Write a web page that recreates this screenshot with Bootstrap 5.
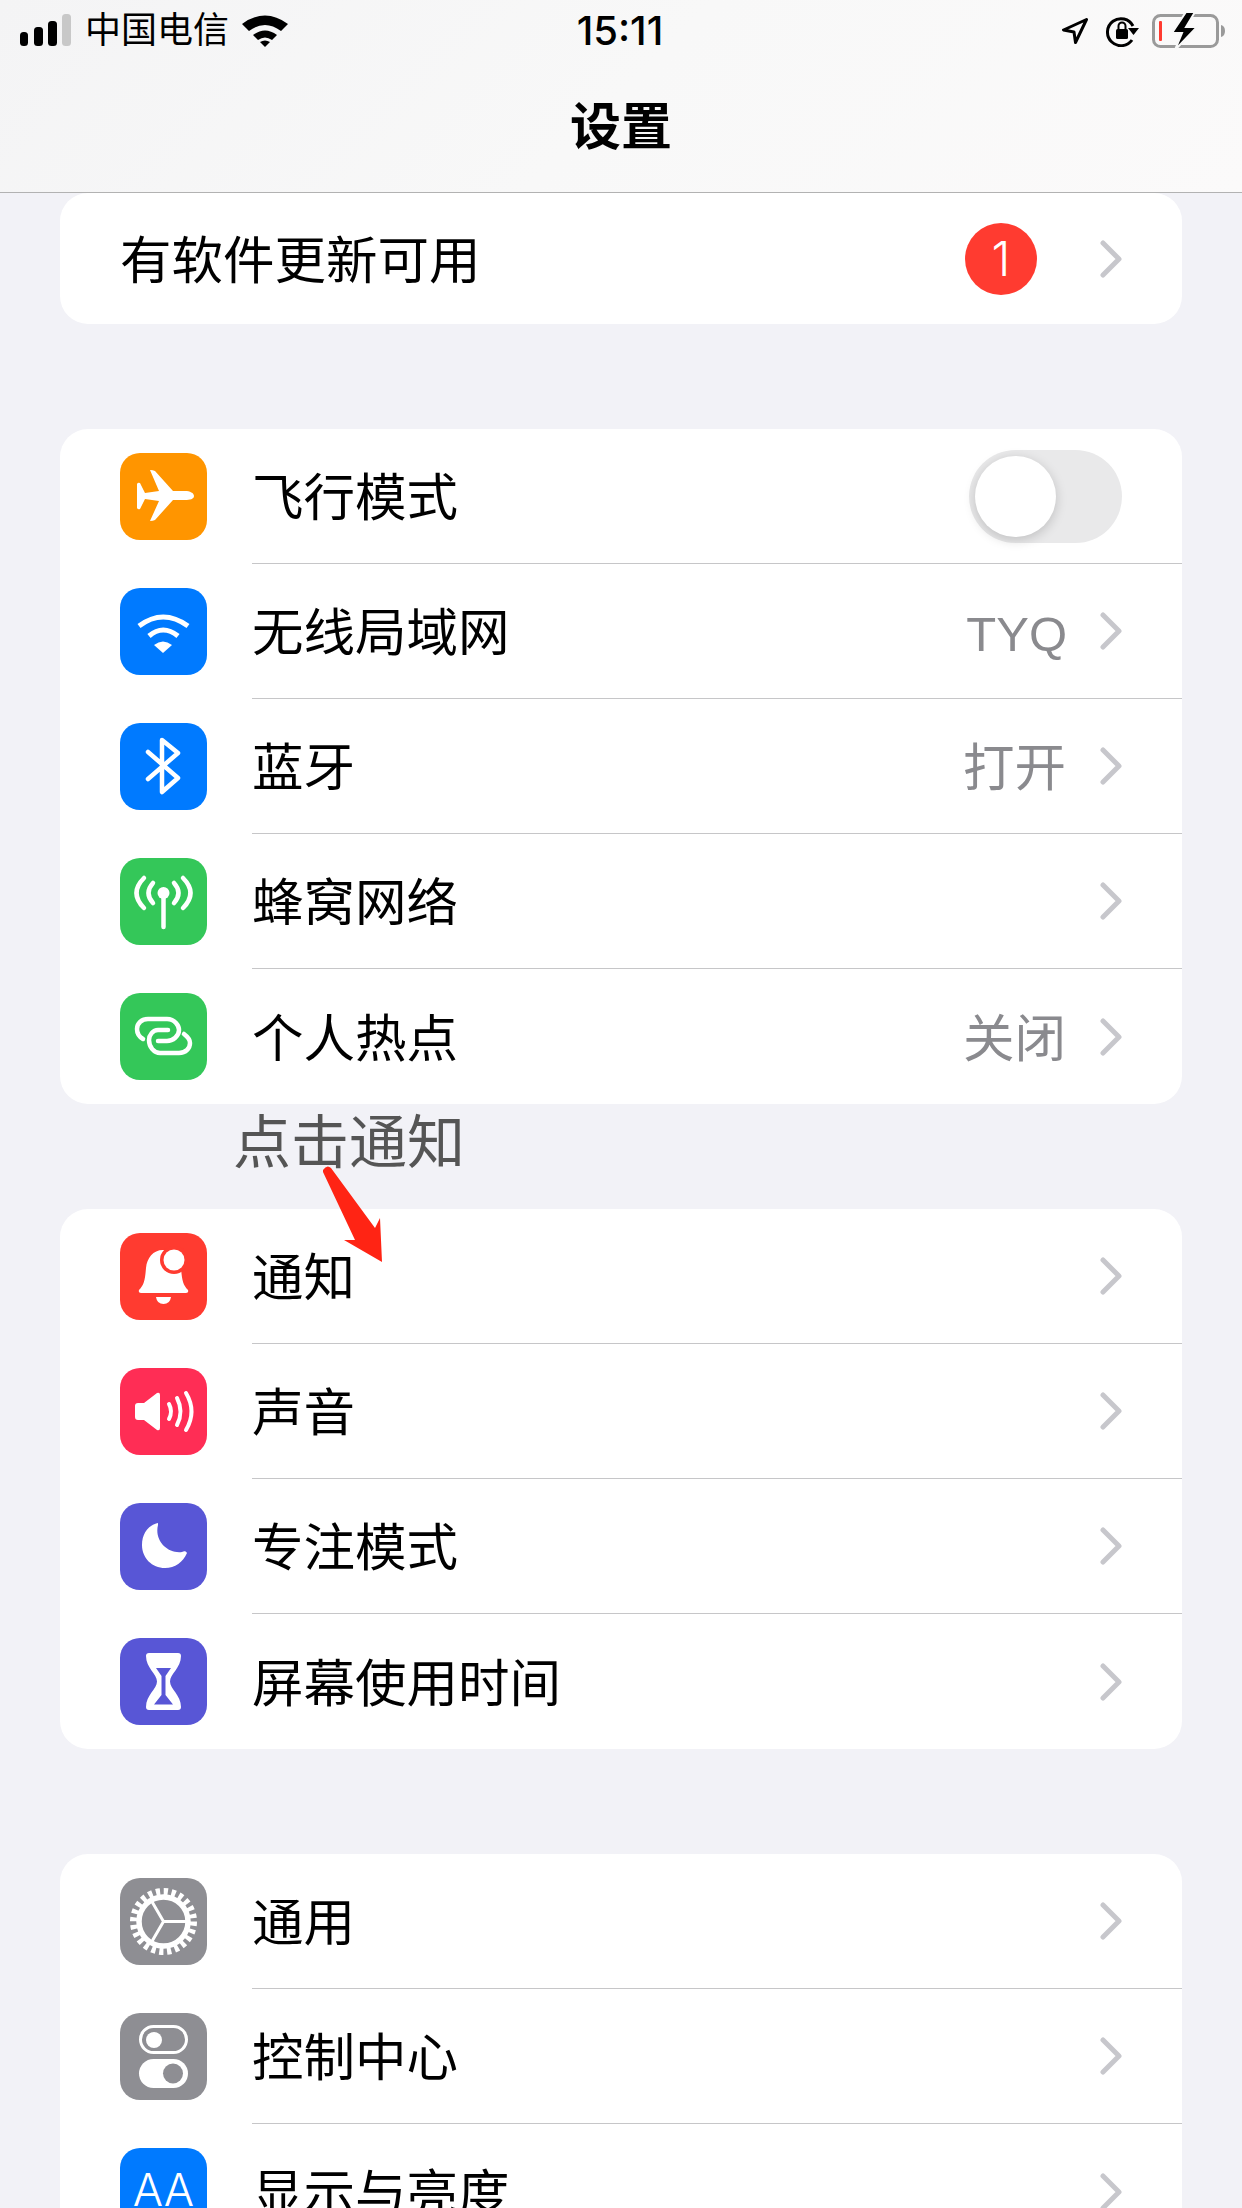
<!DOCTYPE html>
<html lang="zh-CN">
<head>
  <meta charset="UTF-8">
  <meta name="viewport" content="width=device-width, initial-scale=1.0">
  <title>设置</title>
  <link href="https://cdn.jsdelivr.net/npm/bootstrap@5.3.0/dist/css/bootstrap.min.css" rel="stylesheet">
  <style>
    body {
      font-family: "Liberation Sans", "Noto Sans CJK SC", sans-serif;
      background-color: #f2f2f7;
      width: 1242px;
      height: 2208px;
      overflow: hidden;
      position: relative;
      color: #000;
    }
    .top-bar {
      height: 193px;
      background: linear-gradient(135deg, #f4f4f5 0%, #f8f8f8 50%, #fbfafa 100%);
      border-bottom: 1px solid #b2b2b2;
    }
    .status-row {
      height: 62px;
      padding: 0 16px 0 20px;
    }
    .status-side {
      width: 400px;
    }
    .carrier {
      font-size: 36px;
      line-height: 1;
      margin-left: 13px;
      margin-right: 13px;
    }
    .clock {
      font-size: 40px;
      font-weight: 500;
      font-family: Inter, sans-serif;
      line-height: 1;
      margin-right: 6px;
    }
    .lock-icon {
      margin-left: 18px;
    }
    .battery-icon {
      margin-left: 12px;
    }
    .page-title {
      font-size: 51px;
      font-weight: 700;
      line-height: 1;
      margin: 0;
      padding-top: 40px;
      text-align: center;
    }
    .group-list {
      margin: 0 60px 105px;
      background: #fff;
      border-radius: 28px;
      overflow: hidden;
    }
    .set-row {
      height: 135px;
      padding-left: 60px;
      padding-right: 60px;
    }
    .set-row.short-row {
      height: 131px;
    }
    .set-icon {
      width: 87px;
      height: 87px;
      border-radius: 20px;
      flex: 0 0 87px;
      margin-right: 45px;
      display: block;
    }
    .set-body {
      height: 135px;
      border-bottom: 1px solid #c6c6c8;
      margin-right: -60px;
      padding-right: 60px;
    }
    .set-row:last-child .set-body {
      border-bottom: 0;
    }
    .set-label {
      font-size: 51.5px;
      line-height: 1;
      padding-top: 6px;
    }
    .set-value {
      font-size: 51.5px;
      line-height: 1;
      color: #8a8a8e;
      margin-right: 34px;
      padding-top: 6px;
    }
    .set-value.latin-value {
      font-size: 49px;
      margin-right: 33px;
    }
    .chev {
      width: 22px;
      height: 38px;
      display: block;
    }
    .update-badge {
      width: 72px;
      height: 72px;
      border-radius: 50%;
      background: #ff3b30;
      color: #fff;
      font-family: Inter, sans-serif;
      font-weight: 300;
      font-size: 48px;
      line-height: 72px;
      text-align: center;
      margin-right: 63px;
    }
    .toggle-off {
      width: 153px;
      height: 93px;
      border-radius: 47px;
      background: #e9e9ea;
      position: relative;
    }
    .toggle-knob {
      position: absolute;
      left: 6px;
      top: 6px;
      width: 81px;
      height: 81px;
      border-radius: 50%;
      background: #fff;
      box-shadow: 0 3px 12px rgba(0, 0, 0, .18);
    }
    .note-text {
      position: absolute;
      left: 233px;
      top: 1108px;
      font-size: 58px;
      line-height: 1.2;
      color: #555;
    }
    .note-arrow {
      position: absolute;
      left: 315px;
      top: 1160px;
      width: 80px;
      height: 110px;
    }
  </style>
</head>
<body>
  <header class="top-bar">
    <div class="status-row d-flex align-items-center justify-content-between">
      <div class="status-side d-flex align-items-center">
        <svg width="52" height="34" viewBox="0 0 52 34"><rect x="0" y="18" width="8" height="14" rx="3.500" fill="#000"/><rect x="14" y="13" width="9" height="19" rx="3.500" fill="#000"/><rect x="28" y="7" width="9" height="25" rx="3.500" fill="#000"/><rect x="42" y="0" width="9" height="32" rx="3.500" fill="#c8c8c8"/></svg>
        <span class="carrier">中国电信</span>
        <svg width="46" height="34" viewBox="0 0 46 34"><path d="M0 10Q23-7 46 10L39 17Q23 5 7 17Z" fill="#000"/><path d="M11 21Q23 12 35 21L30 26Q23 21 16 26Z" fill="#000"/><path d="M18 28Q23 25 28 28L23 33Z" fill="#000"/></svg>
      </div>
      <div class="clock">15:11</div>
      <div class="status-side d-flex align-items-center justify-content-end">
        <svg width="26" height="26" viewBox="0 0 26 26"><path d="M24.500 1.500L1.500 12L12 14L13.500 24.500Z" fill="none" stroke="#000" stroke-width="3" stroke-linejoin="round"/></svg>
        <svg class="lock-icon" width="34" height="32" viewBox="0 0 34 32"><path d="M26 25A13.500 13.500 0 1 1 27 11" fill="none" stroke="#000" stroke-width="3"/><path d="M22 13H33L27.500 20Z" fill="#000"/><rect x="10" y="14" width="12" height="10" rx="1.500" fill="#000"/><path d="M12.500 14V11A3.500 3.500 0 0 1 19.500 11V14" fill="none" stroke="#000" stroke-width="2"/></svg>
        <svg class="battery-icon" width="74" height="38" viewBox="0 0 74 38"><rect x="1.500" y="3.500" width="64" height="31" rx="7" fill="none" stroke="#9a9a9a" stroke-width="3"/><rect x="7" y="9" width="3" height="20" rx="1" fill="#ff3b30"/><path d="M34 0L20 21H30L23 38L45 15H34L43 0Z" fill="#000" stroke="#f8f8f8" stroke-width="2"/><path d="M69 13Q73 14 73 19Q73 24 69 25Z" fill="#9a9a9a"/></svg>
      </div>
    </div>
    <h1 class="page-title">设置</h1>
  </header>

  <main>
    <div class="group-list">
      <div class="set-row short-row d-flex align-items-center">
        <span class="set-label flex-grow-1">有软件更新可用</span>
        <span class="update-badge">1</span>
        <svg class="chev" viewBox="0 0 22 38"><path d="M3 3L19 19L3 35" fill="none" stroke="#c7c7cc" stroke-width="5" stroke-linecap="round" stroke-linejoin="round"/></svg>
      </div>
    </div>

    <div class="group-list">
      <div class="set-row d-flex align-items-center">
        <svg class="set-icon" viewBox="0 0 87 87"><rect width="87" height="87" fill="#ff9500"/><path d="M74 43C74 40 70 38 65 38H53L35 18Q33 17 30 17L39 38L25 40L20 30Q18 29 17 31V55Q18 57 20 56L25 46L39 48L30 68Q33 68 35 67L53 47H65C70 47 74 46 74 43Z" fill="#fff"/></svg>
        <div class="set-body flex-grow-1 d-flex align-items-center">
          <span class="set-label flex-grow-1">飞行模式</span>
          <div class="toggle-off"><div class="toggle-knob"></div></div>
        </div>
      </div>
      <div class="set-row d-flex align-items-center">
        <svg class="set-icon" viewBox="0 0 87 87"><rect width="87" height="87" fill="#007aff"/><path d="M19 38Q43 20 68 38M29 48Q43 36 58 48" fill="none" stroke="#fff" stroke-width="5"/><path d="M34 57Q43 50 52 57L43 65Z" fill="#fff"/></svg>
        <div class="set-body flex-grow-1 d-flex align-items-center">
          <span class="set-label flex-grow-1">无线局域网</span>
          <span class="set-value latin-value">TYQ</span>
          <svg class="chev" viewBox="0 0 22 38"><path d="M3 3L19 19L3 35" fill="none" stroke="#c7c7cc" stroke-width="5" stroke-linecap="round" stroke-linejoin="round"/></svg>
        </div>
      </div>
      <div class="set-row d-flex align-items-center">
        <svg class="set-icon" viewBox="0 0 87 87"><rect width="87" height="87" fill="#007aff"/><path d="M28 29L58 55L42 69V17L58 30L28 56" fill="none" stroke="#fff" stroke-width="4.500" stroke-linecap="round" stroke-linejoin="round"/></svg>
        <div class="set-body flex-grow-1 d-flex align-items-center">
          <span class="set-label flex-grow-1">蓝牙</span>
          <span class="set-value">打开</span>
          <svg class="chev" viewBox="0 0 22 38"><path d="M3 3L19 19L3 35" fill="none" stroke="#c7c7cc" stroke-width="5" stroke-linecap="round" stroke-linejoin="round"/></svg>
        </div>
      </div>
      <div class="set-row d-flex align-items-center">
        <svg class="set-icon" viewBox="0 0 87 87"><rect width="87" height="87" fill="#34c759"/><circle cx="43.500" cy="35" r="6" fill="#fff"/><path d="M43.500 38V69" stroke="#fff" stroke-width="4.500" stroke-linecap="round"/><path d="M33 25Q24 35 33 45M54 25Q63 35 54 45M24 20Q9 35 24 50M63 20Q78 35 63 50" fill="none" stroke="#fff" stroke-width="4.500" stroke-linecap="round"/></svg>
        <div class="set-body flex-grow-1 d-flex align-items-center">
          <span class="set-label flex-grow-1">蜂窝网络</span>
          <svg class="chev" viewBox="0 0 22 38"><path d="M3 3L19 19L3 35" fill="none" stroke="#c7c7cc" stroke-width="5" stroke-linecap="round" stroke-linejoin="round"/></svg>
        </div>
      </div>
      <div class="set-row d-flex align-items-center">
        <svg class="set-icon" viewBox="0 0 87 87"><rect width="87" height="87" fill="#34c759"/><path d="M23 46C18 43 17 38 17 36C17 30 22 26 28 26H47C55 26 59 33 59 37C59 43 53 48 47 48H38" fill="none" stroke="#fff" stroke-width="4.500" stroke-linecap="round"/><path d="M48 37H38C33 37 29 42 29 47C29 54 34 60 40 60H59C66 60 70 55 70 50C70 46 68 44 64 41" fill="none" stroke="#fff" stroke-width="4.500" stroke-linecap="round"/></svg>
        <div class="set-body flex-grow-1 d-flex align-items-center">
          <span class="set-label flex-grow-1">个人热点</span>
          <span class="set-value">关闭</span>
          <svg class="chev" viewBox="0 0 22 38"><path d="M3 3L19 19L3 35" fill="none" stroke="#c7c7cc" stroke-width="5" stroke-linecap="round" stroke-linejoin="round"/></svg>
        </div>
      </div>
    </div>

    <div class="group-list">
      <div class="set-row d-flex align-items-center">
        <svg class="set-icon" viewBox="0 0 87 87"><rect width="87" height="87" fill="#ff3b30"/><path d="M43 17C33 17 27 25 26 35C25 47 24 52 19 57Q18 60 21 60H66Q69 60 68 57C63 52 62 47 61 35C60 25 53 17 43 17Z" fill="#fff"/><path d="M36 64H51Q50 71 43.500 71Q37 71 36 64Z" fill="#fff"/><circle cx="54" cy="27" r="14" fill="#ff3b30"/><circle cx="54" cy="27" r="10.500" fill="#fff"/></svg>
        <div class="set-body flex-grow-1 d-flex align-items-center">
          <span class="set-label flex-grow-1">通知</span>
          <svg class="chev" viewBox="0 0 22 38"><path d="M3 3L19 19L3 35" fill="none" stroke="#c7c7cc" stroke-width="5" stroke-linecap="round" stroke-linejoin="round"/></svg>
        </div>
      </div>
      <div class="set-row d-flex align-items-center">
        <svg class="set-icon" viewBox="0 0 87 87"><rect width="87" height="87" fill="#ff2d55"/><path d="M18 35H24L37 25Q40 24 40 27V60Q40 63 37 62L24 52H18Q15 52 15 49V38Q15 35 18 35Z" fill="#fff"/><path d="M49 36Q53 43.500 49 51M57 30Q64 43.500 57 57M66 25Q77 43.500 66 62" fill="none" stroke="#fff" stroke-width="4" stroke-linecap="round"/></svg>
        <div class="set-body flex-grow-1 d-flex align-items-center">
          <span class="set-label flex-grow-1">声音</span>
          <svg class="chev" viewBox="0 0 22 38"><path d="M3 3L19 19L3 35" fill="none" stroke="#c7c7cc" stroke-width="5" stroke-linecap="round" stroke-linejoin="round"/></svg>
        </div>
      </div>
      <div class="set-row d-flex align-items-center">
        <svg class="set-icon" viewBox="0 0 87 87"><rect width="87" height="87" fill="#5856d6"/><path d="M38 20C28 22 22 31 22 42C22 55 32 65 45 65C55 65 63 59 67 50C66 48 64 48 62 49C48 51 34 38 38 22Z" fill="#fff"/></svg>
        <div class="set-body flex-grow-1 d-flex align-items-center">
          <span class="set-label flex-grow-1">专注模式</span>
          <svg class="chev" viewBox="0 0 22 38"><path d="M3 3L19 19L3 35" fill="none" stroke="#c7c7cc" stroke-width="5" stroke-linecap="round" stroke-linejoin="round"/></svg>
        </div>
      </div>
      <div class="set-row d-flex align-items-center">
        <svg class="set-icon" viewBox="0 0 87 87"><rect width="87" height="87" fill="#5856d6"/><path d="M29 15H58Q61 15 61 18C61 30 50 36 50 43.500C50 51 61 57 61 69Q61 72 58 72H29Q26 72 26 69C26 57 37 51 37 43.500C37 36 26 30 26 18Q26 15 29 15Z" fill="#fff"/><path d="M36 30H51L45.500 38V57L53 66.500H34L41.500 57V38Z" fill="#5856d6"/></svg>
        <div class="set-body flex-grow-1 d-flex align-items-center">
          <span class="set-label flex-grow-1">屏幕使用时间</span>
          <svg class="chev" viewBox="0 0 22 38"><path d="M3 3L19 19L3 35" fill="none" stroke="#c7c7cc" stroke-width="5" stroke-linecap="round" stroke-linejoin="round"/></svg>
        </div>
      </div>
    </div>

    <div class="group-list">
      <div class="set-row d-flex align-items-center">
        <svg class="set-icon" viewBox="0 0 87 87"><rect width="87" height="87" fill="#8e8e93"/><circle cx="43.500" cy="43.500" r="30" fill="none" stroke="#fff" stroke-width="7" stroke-dasharray="4.200 3.654"/><circle cx="43.500" cy="43.500" r="24.500" fill="none" stroke="#fff" stroke-width="5.500"/><path d="M43.500 43.500H68M43.500 43.500L31 22M43.500 43.500L31 65" stroke="#fff" stroke-width="3"/></svg>
        <div class="set-body flex-grow-1 d-flex align-items-center">
          <span class="set-label flex-grow-1">通用</span>
          <svg class="chev" viewBox="0 0 22 38"><path d="M3 3L19 19L3 35" fill="none" stroke="#c7c7cc" stroke-width="5" stroke-linecap="round" stroke-linejoin="round"/></svg>
        </div>
      </div>
      <div class="set-row d-flex align-items-center">
        <svg class="set-icon" viewBox="0 0 87 87"><rect width="87" height="87" fill="#8e8e93"/><rect x="20.500" y="13.500" width="46" height="26" rx="13" fill="none" stroke="#fff" stroke-width="3"/><circle cx="34" cy="27" r="8" fill="#fff"/><rect x="19" y="46" width="49" height="29" rx="14.500" fill="#fff"/><circle cx="53" cy="60.500" r="10" fill="#8e8e93"/></svg>
        <div class="set-body flex-grow-1 d-flex align-items-center">
          <span class="set-label flex-grow-1">控制中心</span>
          <svg class="chev" viewBox="0 0 22 38"><path d="M3 3L19 19L3 35" fill="none" stroke="#c7c7cc" stroke-width="5" stroke-linecap="round" stroke-linejoin="round"/></svg>
        </div>
      </div>
      <div class="set-row d-flex align-items-center">
        <svg class="set-icon" viewBox="0 0 87 87"><rect width="87" height="87" fill="#007aff"/><text x="43.500" y="58" text-anchor="middle" font-size="45" font-weight="300" font-family="Inter" fill="#fff">AA</text></svg>
        <div class="set-body flex-grow-1 d-flex align-items-center">
          <span class="set-label flex-grow-1">显示与亮度</span>
          <svg class="chev" viewBox="0 0 22 38"><path d="M3 3L19 19L3 35" fill="none" stroke="#c7c7cc" stroke-width="5" stroke-linecap="round" stroke-linejoin="round"/></svg>
        </div>
      </div>
    </div>
  </main>

  <div class="note-text">点击通知</div>
  <svg class="note-arrow" viewBox="0 0 80 110"><path d="M8 10Q12 4 16 8L60 68L65 58L67 102L29 80L40 80L8 12Z" fill="#ff2414"/></svg>

  <script src="https://cdn.jsdelivr.net/npm/bootstrap@5.3.0/dist/js/bootstrap.bundle.min.js"></script>
</body>
</html>
